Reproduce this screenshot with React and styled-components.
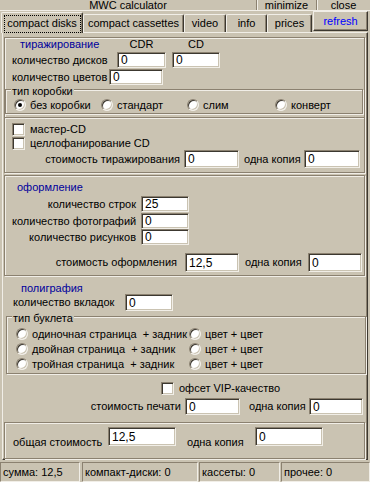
import React from 'react';
import styled, { createGlobalStyle } from 'styled-components';

const C = {
  face: '#cac3b2',
  hl: '#f1eee7',
  shadow: '#8b8170',
  dark: '#3c3830',
  navy: '#00009c',
  blue: '#0000ff',
};

const GlobalStyle = createGlobalStyle`
  html, body { margin: 0; padding: 0; background: ${C.face}; }
  body { font-family: "Liberation Sans", Arial, sans-serif; font-size: 11px; color: #000; }
  * { box-sizing: border-box; }
`;

const Window = styled.div`
  width: 370px;
  height: 482px;
  display: flex;
  flex-direction: column;
  background: ${C.face};
  overflow: hidden;
  font-family: "Liberation Sans", Arial, sans-serif;
  font-size: 11px;
  line-height: 13px;
`;

const TitleBar = styled.div`
  display: flex;
  height: 11px;
  border-bottom: 1px solid ${C.hl};
  line-height: 10px;
`;

const TitleText = styled.div`
  flex: 1;
  text-align: center;
`;

const TitleButton = styled.div`
  width: ${({ $w }) => $w}px;
  text-align: center;
  border-left: 1px solid ${C.shadow};
  box-shadow: inset 1px 0 0 ${C.hl};
`;

const TabStrip = styled.div`
  display: flex;
  align-items: flex-end;
  height: 21px;
  padding-left: 1px;
  position: relative;
  z-index: 1;
`;

const Tab = styled.div`
  width: ${({ $w }) => $w}px;
  height: ${({ $active }) => ($active ? 21 : 18)}px;
  margin-bottom: ${({ $active }) => ($active ? -1 : 0)}px;
  display: flex;
  align-items: center;
  justify-content: center;
  background: ${C.face};
  border-top: 1px solid ${C.hl};
  border-left: 1px solid ${C.hl};
  border-right: 1px solid ${C.dark};
  box-shadow: inset -1px 0 0 ${C.shadow};
  border-radius: 2px 2px 0 0;
  white-space: nowrap;
  font-size: 11px;
`;

const FocusLabel = styled.span`
  width: 77px;
  height: 18px;
  display: flex;
  align-items: center;
  justify-content: center;
  border: 1px dotted #000;
  margin-top: 1px;
`;

const RefreshButton = styled.div`
  width: 55px;
  height: 20px;
  margin-left: 1px;
  margin-bottom: 1px;
  display: flex;
  align-items: center;
  justify-content: center;
  color: ${C.blue};
  border: 1px solid;
  border-color: ${C.hl} ${C.dark} ${C.dark} ${C.hl};
  box-shadow: inset -1px -1px 0 ${C.shadow};
`;

const Panel = styled.div`
  margin-left: 2px;
  width: 366px;
  height: 428px;
  display: flex;
  flex-direction: column;
  padding: 4px 1px 0 1px;
  border: 1px solid;
  border-color: ${C.hl} ${C.dark} ${C.dark} ${C.hl};
  box-shadow: inset -1px -1px 0 ${C.shadow};
`;

const Section = styled.div`
  width: 361px;
  display: flex;
  flex-direction: column;
  margin-top: ${({ $mt = 0 }) => $mt}px;
  padding: ${({ $p = '0' }) => $p};
  border: 1px solid ${C.shadow};
  box-shadow: inset 1px 1px 0 ${C.hl}, 1px 1px 0 ${C.hl};
`;

const Heading = styled.div`
  color: ${C.navy};
  padding-left: ${({ $pl = 0 }) => $pl}px;
  margin-top: ${({ $mt = 0 }) => $mt}px;
  line-height: ${({ $lh = 13 }) => $lh}px;
`;

const SectionTitle = styled.span`
  color: ${C.navy};
  width: ${({ $w }) => $w}px;
  padding-left: ${({ $pl = 0 }) => $pl}px;
  flex-shrink: 0;
`;

const ColHead = styled.span`
  width: ${({ $w }) => $w}px;
  margin-left: ${({ $ml = 0 }) => $ml}px;
  text-align: center;
  flex-shrink: 0;
`;

const Row = styled.div`
  display: flex;
  align-items: ${({ $align = 'center' }) => $align};
  height: ${({ $h }) => ($h ? `${$h}px` : 'auto')};
  margin-top: ${({ $mt = 0 }) => $mt}px;
  padding-left: ${({ $pl = 0 }) => $pl}px;
`;

const Label = styled.span`
  width: ${({ $w }) => $w}px;
  margin-left: ${({ $ml = 0 }) => $ml}px;
  margin-top: ${({ $mt = 0 }) => $mt}px;
  text-align: ${({ $align = 'left' }) => $align};
  white-space: nowrap;
  flex-shrink: 0;
`;

const Field = styled.input`
  width: ${({ $w }) => $w}px;
  height: ${({ $h }) => ($h ? `${$h}px` : '100%')};
  margin: 0 0 0 ${({ $ml = 0 }) => $ml}px;
  padding: 0 0 0 3px;
  flex-shrink: 0;
  background: #fff;
  border: 1px solid;
  border-color: ${C.shadow} ${C.hl} ${C.hl} ${C.shadow};
  box-shadow: inset 1px 1px 0 ${C.dark}, inset -1px -1px 0 ${C.face};
  font-family: "Liberation Sans", Arial, sans-serif;
  font-size: 12px;
  color: #000;
  outline: none;
  border-radius: 0;
`;

const GroupBox = styled.div`
  display: flex;
  flex-direction: column;
  width: ${({ $w }) => $w}px;
  margin-top: ${({ $mt = 0 }) => $mt}px;
  margin-left: ${({ $ml = 0 }) => $ml}px;
  padding-bottom: ${({ $pb = 2 }) => $pb}px;
  border: 1px solid ${C.shadow};
  box-shadow: inset 1px 1px 0 ${C.hl}, 1px 1px 0 ${C.hl};
`;

const GroupTitle = styled.span`
  align-self: flex-start;
  margin: -5px 0 0 5px;
  padding: 0 1px;
  background: ${C.face};
  line-height: 13px;
`;

const RadioGrid = styled.div`
  display: grid;
  grid-template-columns: ${({ $cols }) => $cols};
  row-gap: ${({ $gap = 0 }) => $gap}px;
  padding-left: ${({ $pl = 0 }) => $pl}px;
  margin-top: ${({ $mt = 0 }) => $mt}px;
`;

const RadioItem = styled.label`
  display: flex;
  align-items: center;
  gap: 4px;
  height: 12px;
  white-space: nowrap;
`;

const RadioMark = styled.span`
  width: 12px;
  height: 12px;
  flex-shrink: 0;
  border-radius: 50%;
  background: #fff;
  border: 1px solid;
  border-color: ${C.shadow} ${C.hl} ${C.hl} ${C.shadow};
  box-shadow: inset 1px 1px 0 ${C.dark}, inset -1px -1px 0 ${C.face};
  display: flex;
  align-items: center;
  justify-content: center;
  &::after {
    content: '';
    width: 4px;
    height: 4px;
    border-radius: 50%;
    background: ${({ $checked }) => ($checked ? '#000' : 'transparent')};
  }
`;

const CheckRow = styled.label`
  display: flex;
  align-items: center;
  gap: 5px;
  height: 13px;
  margin-top: ${({ $mt = 0 }) => $mt}px;
  padding-left: ${({ $pl = 0 }) => $pl}px;
  white-space: nowrap;
`;

const CheckMark = styled.span`
  width: 13px;
  height: 13px;
  flex-shrink: 0;
  background: #fff;
  border: 1px solid;
  border-color: ${C.shadow} ${C.hl} ${C.hl} ${C.shadow};
  box-shadow: inset 1px 1px 0 ${C.dark}, inset -1px -1px 0 ${C.face};
`;

const Divider = styled.div`
  margin-top: ${({ $mt = 0 }) => $mt}px;
  height: 2px;
  border-top: 1px solid ${C.shadow};
  border-bottom: 1px solid ${C.hl};
`;

const StatusBar = styled.div`
  display: flex;
  height: 20px;
  margin-top: 2px;
`;

const StatusCell = styled.div`
  width: ${({ $w }) => $w}px;
  margin-left: ${({ $ml = 0 }) => $ml}px;
  padding-left: 2px;
  line-height: 18px;
  white-space: nowrap;
  border: 1px solid;
  border-color: ${C.shadow} ${C.hl} ${C.hl} ${C.shadow};
`;

const tabs = [
  { label: 'compact disks', w: 82, active: true },
  { label: 'compact cassettes', w: 101 },
  { label: 'video', w: 42 },
  { label: 'info', w: 41 },
  { label: 'prices', w: 45 },
];

const NB = '\u00a0';

const Radio = ({ checked, children }) => (
  <RadioItem>
    <RadioMark $checked={checked} />
    <span>{children}</span>
  </RadioItem>
);

const Check = ({ children, ...rest }) => (
  <CheckRow {...rest}>
    <CheckMark />
    <span>{children}</span>
  </CheckRow>
);

export default function App() {
  return (
    <Window>
      <GlobalStyle />
      <TitleBar>
        <TitleText>MWC calculator</TitleText>
        <TitleButton $w={60}>minimize</TitleButton>
        <TitleButton $w={54}>close</TitleButton>
      </TitleBar>

      <TabStrip>
        {tabs.map((t) => (
          <Tab key={t.label} $w={t.w} $active={t.active}>
            {t.active ? <FocusLabel>{t.label}</FocusLabel> : t.label}
          </Tab>
        ))}
        <RefreshButton>refresh</RefreshButton>
      </TabStrip>

      <Panel>
        <Section $p="0 0 4px 0">
          <Row $h={13}>
            <SectionTitle $w={112} $pl={15}>тиражирование</SectionTitle>
            <ColHead $w={49}>CDR</ColHead>
            <ColHead $w={48} $ml={6}>CD</ColHead>
          </Row>
          <Row $h={16} $mt={1} $pl={7}>
            <Label $w={105}>количество дисков</Label>
            <Field $w={49} defaultValue="0" />
            <Field $w={48} $ml={6} defaultValue="0" />
          </Row>
          <Row $h={16} $mt={1} $pl={7}>
            <Label $w={97}>количество цветов</Label>
            <Field $w={54} defaultValue="0" />
          </Row>
          <GroupBox $w={358} $mt={4} $pb={2}>
            <GroupTitle>тип коробки</GroupTitle>
            <RadioGrid $cols="87px 86px 88px 1fr" $pl={8} $mt={1}>
              <Radio checked>без коробки</Radio>
              <Radio>стандарт</Radio>
              <Radio>слим</Radio>
              <Radio>конверт</Radio>
            </RadioGrid>
          </GroupBox>
          <Divider $mt={3} />
          <Check $mt={4} $pl={7}>мастер-CD</Check>
          <Check $mt={1} $pl={7}>целлофанирование CD</Check>
          <Row $h={18} $pl={7}>
            <Label $w={168} $align="right">стоимость тиражирования</Label>
            <Field $w={55} $ml={4} defaultValue="0" />
            <Label $w={58} $ml={5}>одна копия</Label>
            <Field $w={56} $ml={2} defaultValue="0" />
          </Row>
        </Section>

        <Section $mt={2} $p="0 0 3px 0">
          <Heading $pl={12} $mt={5}>оформление</Heading>
          <Row $h={16} $mt={2} $pl={7}>
            <Label $w={124} $align="right">количество строк</Label>
            <Field $w={48} $ml={5} defaultValue="25" />
          </Row>
          <Row $h={16} $mt={1} $pl={7}>
            <Label $w={124} $align="right">количество фотографий</Label>
            <Field $w={48} $ml={5} defaultValue="0" />
          </Row>
          <Row $h={16} $pl={7}>
            <Label $w={124} $align="right">количество рисунков</Label>
            <Field $w={48} $ml={5} defaultValue="0" />
          </Row>
          <Row $h={19} $mt={8} $pl={7}>
            <Label $w={165} $align="right">стоимость оформления</Label>
            <Field $w={54} $ml={8} defaultValue="12,5" />
            <Label $w={57} $ml={6}>одна копия</Label>
            <Field $w={54} $ml={6} defaultValue="0" />
          </Row>
        </Section>

        <Heading $pl={17} $mt={7} $lh={11}>полиграфия</Heading>
        <Row $h={19} $pl={9}>
          <Label $w={112}>количество вкладок</Label>
          <Field $w={48} defaultValue="0" />
        </Row>

        <GroupBox $w={360} $mt={5} $ml={2} $pb={3}>
          <GroupTitle>тип буклета</GroupTitle>
          <RadioGrid $cols="173px 1fr" $gap={3} $pl={9} $mt={3}>
            <Radio>{`одиночная страница${NB} + задник`}</Radio>
            <Radio>цвет + цвет</Radio>
            <Radio>{`двойная страница${NB} + задник`}</Radio>
            <Radio>цвет + цвет</Radio>
            <Radio>{`тройная страница${NB} + задник`}</Radio>
            <Radio>цвет + цвет</Radio>
          </RadioGrid>
        </GroupBox>

        <Check $mt={8} $pl={157}>офсет VIP-качество</Check>
        <Row $h={18} $mt={3} $pl={9}>
          <Label $w={168} $align="right">стоимость печати</Label>
          <Field $w={55} $ml={4} defaultValue="0" />
          <Label $w={57} $ml={9}>одна копия</Label>
          <Field $w={54} $ml={3} defaultValue="0" />
        </Row>

        <Section $mt={7} $p="4px 0 9px 8px">
          <Row $align="flex-start">
            <Label $w={95} $mt={9}>общая стоимость</Label>
            <Field $w={68} $h={19} defaultValue="12,5" />
            <Label $w={68} $ml={11} $mt={9}>одна копия</Label>
            <Field $w={68} $h={19} defaultValue="0" />
          </Row>
        </Section>
      </Panel>

      <StatusBar>
        <StatusCell $w={80}>сумма: 12,5</StatusCell>
        <StatusCell $w={116} $ml={2}>компакт-диски: 0</StatusCell>
        <StatusCell $w={81} $ml={1}>кассеты: 0</StatusCell>
        <StatusCell $w={89} $ml={1}>прочее: 0</StatusCell>
      </StatusBar>
    </Window>
  );
}
